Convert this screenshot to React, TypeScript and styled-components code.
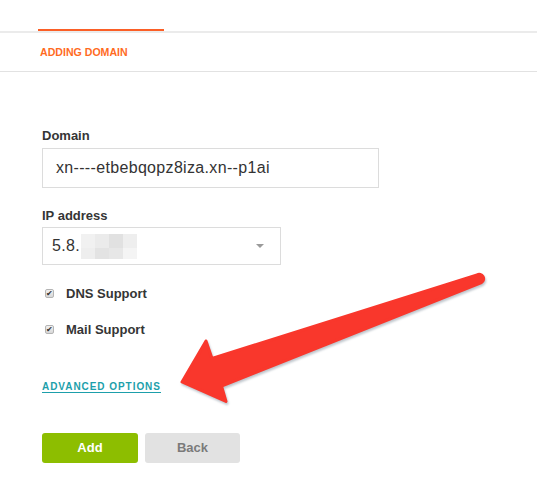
import React from 'react';
import styled, { createGlobalStyle } from 'styled-components';

const GlobalStyle = createGlobalStyle`
  html, body {
    margin: 0;
    padding: 0;
    background: #ffffff;
  }
  body {
    font-family: "Liberation Sans", Arial, sans-serif;
  }
`;

const Page = styled.div`
  position: relative;
  width: 537px;
  min-height: 501px;
  background: #ffffff;
  overflow: hidden;
`;

const TabBar = styled.div`
  padding-top: 29px;
  border-bottom: 2px solid #ebebeb;
`;

const ActiveTabLine = styled.div`
  margin-left: 38px;
  width: 126px;
  height: 2px;
  background: #fb5f26;
`;

const TitleRow = styled.div`
  display: flex;
  align-items: center;
  height: 38px;
  padding-left: 40px;
  border-bottom: 1px solid #e2e2e2;
`;

const Title = styled.span`
  font-size: 10.6px;
  font-weight: 700;
  color: #ff6b1f;
`;

const Form = styled.form`
  display: flex;
  flex-direction: column;
  align-items: flex-start;
  padding: 56px 0 0 42px;
`;

const Field = styled.div<{ $gap: number }>`
  display: flex;
  flex-direction: column;
  margin-bottom: ${(p) => p.$gap}px;
`;

const Label = styled.label`
  font-size: 13px;
  line-height: 15px;
  font-weight: 700;
  color: #353535;
  margin-bottom: 4.5px;
`;

const TextBox = styled.div<{ $width: number; $height: number; $pad: number }>`
  box-sizing: border-box;
  display: flex;
  align-items: center;
  width: ${(p) => p.$width}px;
  height: ${(p) => p.$height}px;
  padding-left: ${(p) => p.$pad}px;
  border: 1px solid #dcdcdc;
  font-size: 16px;
  letter-spacing: 0.33px;
  color: #333333;
`;

const Mosaic = styled.span`
  display: grid;
  grid-template-columns: repeat(4, 14px);
  grid-template-rows: 14px 11px;
  margin-left: 1px;
`;

const Cell = styled.span<{ $tone: string }>`
  background: ${(p) => p.$tone};
`;

const Caret = styled.span`
  margin-left: auto;
  margin-right: 16px;
  width: 0;
  height: 0;
  border-left: 4px solid transparent;
  border-right: 4px solid transparent;
  border-top: 4px solid #9a9a9a;
`;

const CheckList = styled.div`
  display: flex;
  flex-direction: column;
  gap: 21px;
  margin-top: 21px;
`;

const CheckRow = styled.div`
  display: flex;
  align-items: center;
  height: 15px;
  padding-left: 3px;
`;

const CheckBox = styled.span`
  box-sizing: border-box;
  display: flex;
  align-items: center;
  justify-content: center;
  width: 9px;
  height: 9px;
  margin-right: 12px;
  border: 1px solid #b4b4b4;
  border-radius: 2px;
  background: linear-gradient(#f0f0f0, #d8d8d8);
  font-size: 8px;
  line-height: 1;
  color: #303030;
`;

const CheckLabel = styled.span`
  font-size: 13px;
  line-height: 15px;
  font-weight: 700;
  color: #353535;
`;

const AdvancedLink = styled.a`
  display: inline-block;
  margin-top: 43.5px;
  font-size: 10px;
  line-height: 11px;
  font-weight: 700;
  letter-spacing: 0.95px;
  color: #1d9fab;
  text-decoration: none;
  border-bottom: 1px solid #1d9fab;
`;

const ButtonRow = styled.div`
  display: flex;
  gap: 7px;
  margin-top: 40px;
`;

const Button = styled.button<{ $primary?: boolean }>`
  width: ${(p) => (p.$primary ? 96 : 95)}px;
  height: 30px;
  border: none;
  border-radius: 3px;
  font-family: "Liberation Sans", Arial, sans-serif;
  font-size: 13px;
  font-weight: 700;
  color: ${(p) => (p.$primary ? '#ffffff' : '#7a7a7a')};
  background: ${(p) => (p.$primary ? '#8dbe00' : '#e2e2e2')};
`;

const Annotation = styled.svg`
  position: absolute;
  left: 0;
  top: 0;
  pointer-events: none;
  filter: drop-shadow(1px 2px 1px rgba(70, 90, 110, 0.35));
`;

const mosaicTones = [
  '#f1f1f1', '#ebebeb', '#e1e1e1', '#eeeeee',
  '#eeeeee', '#e3e3e3', '#e7e7e7', '#f4f4f4',
];

export default function App() {
  return (
    <>
      <GlobalStyle />
      <Page>
        <TabBar>
          <ActiveTabLine />
        </TabBar>
        <TitleRow>
          <Title>ADDING DOMAIN</Title>
        </TitleRow>
        <Form>
          <Field $gap={20}>
            <Label>Domain</Label>
            <TextBox $width={337} $height={40} $pad={13}>
              xn----etbebqopz8iza.xn--p1ai
            </TextBox>
          </Field>
          <Field $gap={0}>
            <Label>IP address</Label>
            <TextBox $width={239} $height={38} $pad={9}>
              5.8.
              <Mosaic>
                {mosaicTones.map((tone, i) => (
                  <Cell key={i} $tone={tone} />
                ))}
              </Mosaic>
              <Caret />
            </TextBox>
          </Field>
          <CheckList>
            <CheckRow>
              <CheckBox>✔</CheckBox>
              <CheckLabel>DNS Support</CheckLabel>
            </CheckRow>
            <CheckRow>
              <CheckBox>✔</CheckBox>
              <CheckLabel>Mail Support</CheckLabel>
            </CheckRow>
          </CheckList>
          <AdvancedLink href="#">ADVANCED OPTIONS</AdvancedLink>
          <ButtonRow>
            <Button type="button" $primary>
              Add
            </Button>
            <Button type="button">Back</Button>
          </ButtonRow>
        </Form>
        <Annotation width="537" height="501" viewBox="0 0 537 501">
          <path
            d="M 477 275 L 212 358.5 L 206 341 L 182 382 L 226 401.5 L 221.5 386 L 481.5 282.5 A 4.2 4.2 0 0 0 477 275 Z"
            fill="#f9372c"
            stroke="#f9372c"
            strokeWidth="3"
            strokeLinejoin="round"
          />
        </Annotation>
      </Page>
    </>
  );
}
